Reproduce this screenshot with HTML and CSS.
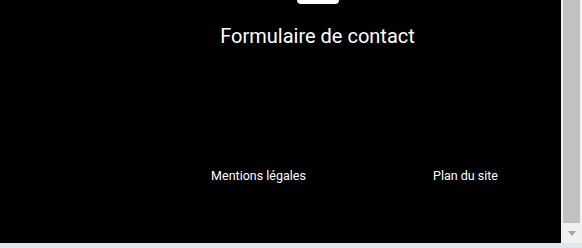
FILE: index.html
```html
<!DOCTYPE html>
<html lang="fr">
<head>
<meta charset="utf-8">
<title>Formulaire de contact</title>
<link rel="stylesheet" href="styles.css">
</head>
<body>
<div class="window">
  <div class="page">
    <header class="head">
      <div class="tab"></div>
      <h1 class="title">Formulaire de contact</h1>
    </header>
    <footer class="foot">
      <a class="link" href="#">Mentions légales</a>
      <a class="link" href="#">Plan du site</a>
    </footer>
  </div>
  <div class="scrollbar">
    <div class="thumb"></div>
    <div class="arrow"></div>
  </div>
  <div class="status"></div>
</div>
</body>
</html>
```
FILE: styles.css
```css
html, body {
  margin: 0;
  padding: 0;
  background: #000;
}
body {
  font-family: Roboto, "Liberation Sans", Arial, sans-serif;
  overflow: hidden;
}
.window {
  display: grid;
  grid-template-columns: 561px 21px;
  grid-template-rows: 243px 5px;
  width: 582px;
  height: 248px;
}
.page {
  background: #000;
  overflow: hidden;
  display: flex;
  flex-direction: column;
}
.head {
  display: flex;
  flex-direction: column;
  align-items: center;
  padding-left: 74px;
}
.tab {
  width: 42px;
  height: 4px;
  background: #fff;
  border-radius: 0 0 4px 4px;
}
.title {
  margin: 21px 0 0;
  font-size: 20px;
  font-weight: 400;
  line-height: 23px;
  color: #fff;
}
.foot {
  display: grid;
  grid-template-columns: 207px 207px;
  padding-left: 155px;
  margin-top: 120px;
}
.link {
  text-align: center;
  color: #fff;
  font-size: 12.5px;
  line-height: 15px;
  text-decoration: none;
}
.scrollbar {
  background: #f0f0f0;
  display: flex;
  flex-direction: column;
  align-items: center;
}
.thumb {
  width: 17px;
  height: 223px;
  margin-left: 2px;
  background: #c1c1c1;
  align-self: flex-start;
}
.arrow {
  margin-top: 8px;
  width: 0;
  height: 0;
  border-left: 4.5px solid transparent;
  border-right: 4.5px solid transparent;
  border-top: 5px solid #a3a3a3;
}
.status {
  grid-column: 1 / 3;
  background: #dfe6ec;
}
```
